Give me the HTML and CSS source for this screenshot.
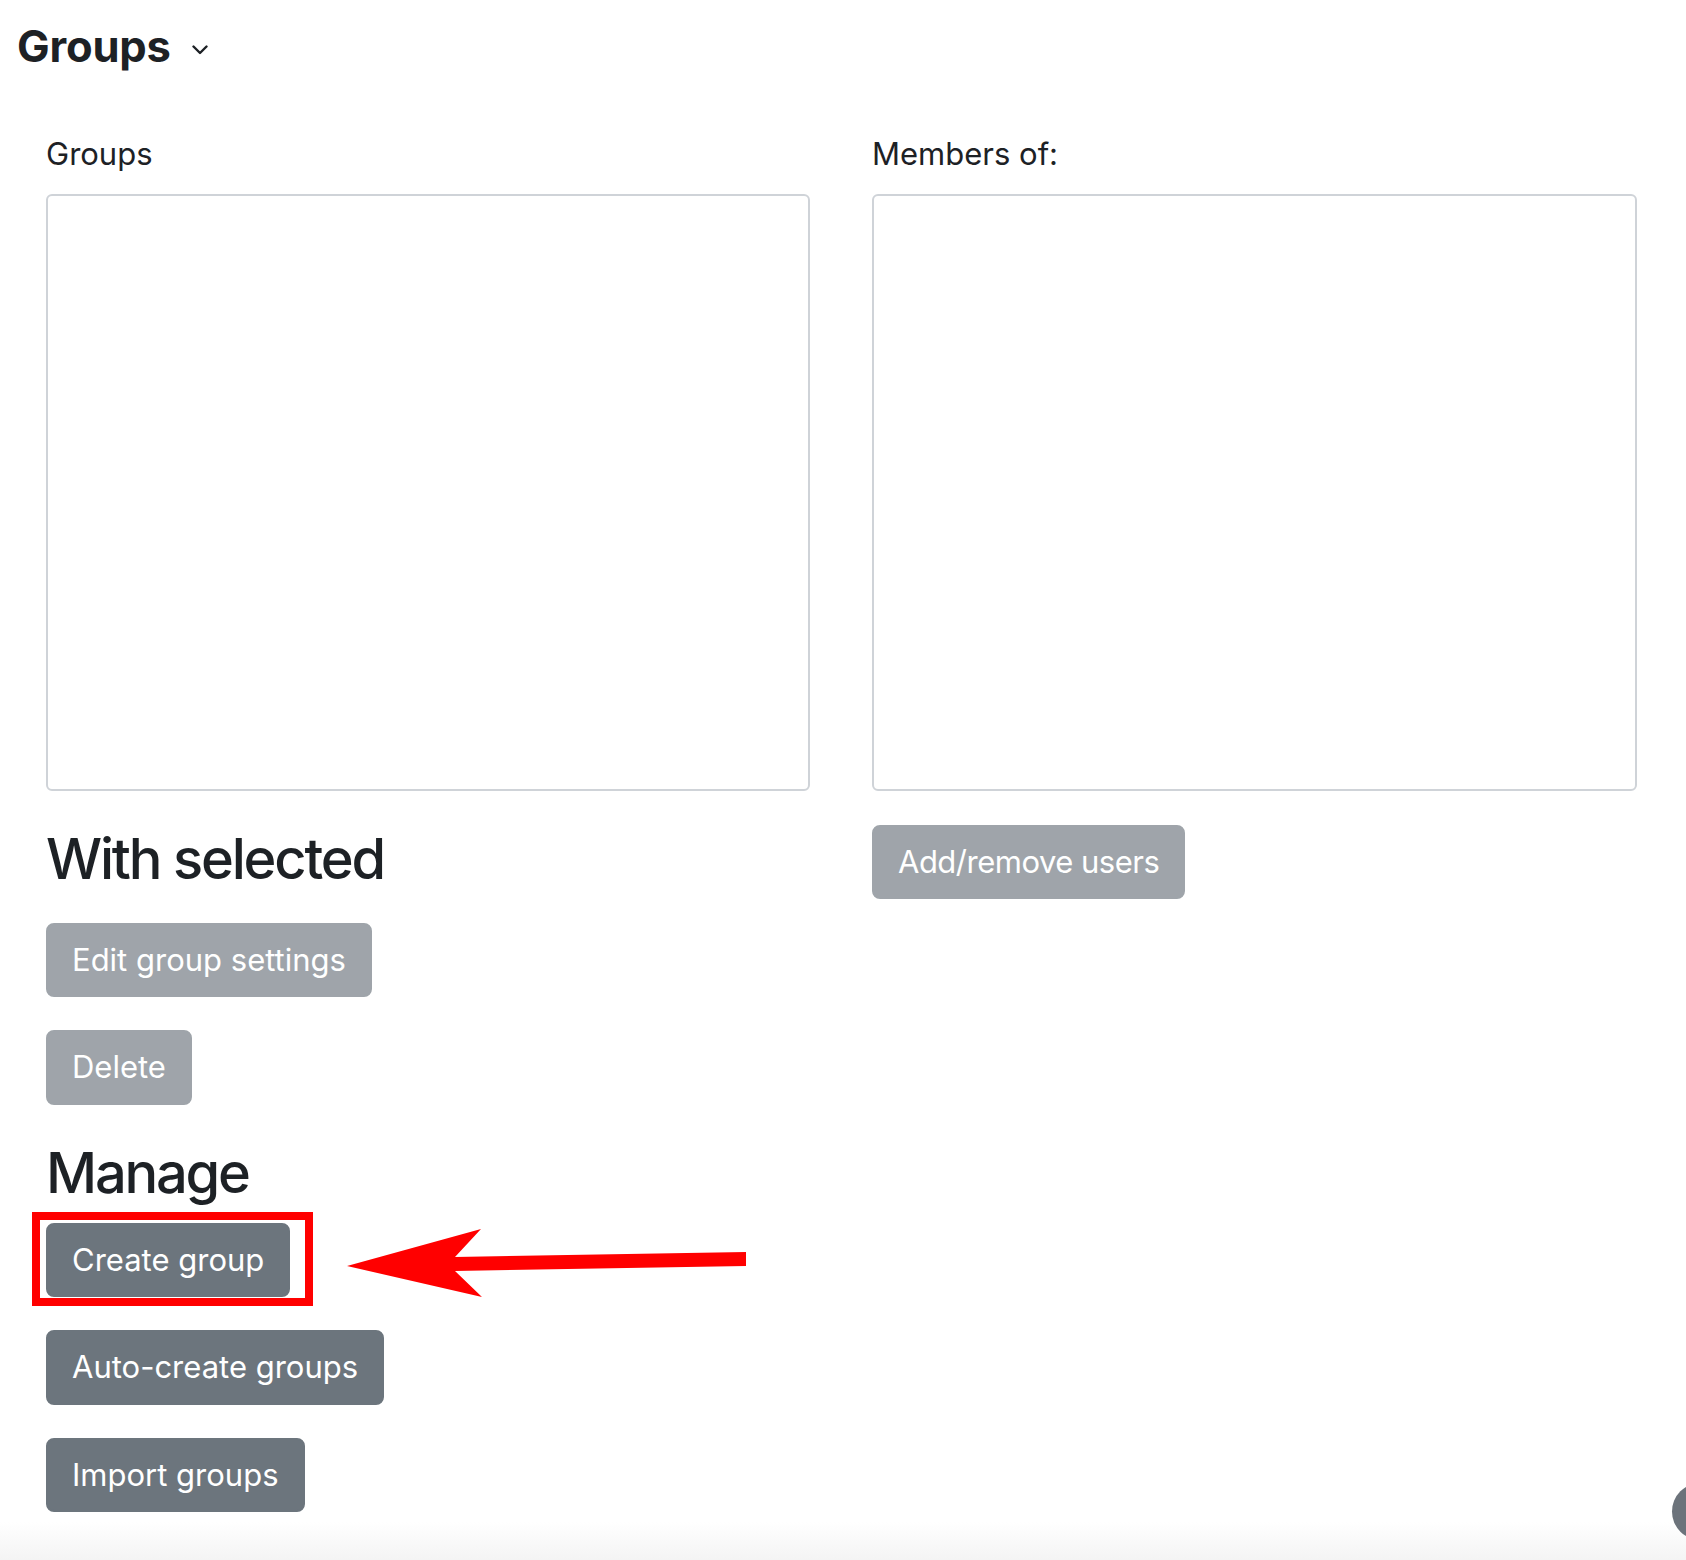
FILE: index.html
```html
<!DOCTYPE html>
<html lang="en">
<head>
<meta charset="utf-8">
<title>Groups</title>
<link rel="stylesheet" href="styles.css">
</head>
<body>
<div class="page">
  <header class="page-head">
    <h2 class="page-title">Groups
      <svg class="chevron" width="16" height="10" viewBox="0 0 16 10" aria-hidden="true"><path d="M1.5 1.5 L8 8 L14.5 1.5" fill="none" stroke="#1d2125" stroke-width="2.4" stroke-linecap="round" stroke-linejoin="round"/></svg>
    </h2>
  </header>

  <main class="groups-grid">
    <section class="col">
      <label class="field-label">Groups</label>
      <div class="listbox" role="listbox"></div>
      <h3 class="section-title title-selected">With selected</h3>
      <div class="btn-stack">
        <button class="btn btn-disabled" disabled>Edit group settings</button>
        <button class="btn btn-disabled" disabled>Delete</button>
      </div>
      <h3 class="section-title title-manage">Manage</h3>
      <div class="btn-stack">
        <button class="btn">Create group</button>
        <button class="btn">Auto-create groups</button>
        <button class="btn">Import groups</button>
      </div>
    </section>

    <section class="col">
      <label class="field-label">Members of:</label>
      <div class="listbox" role="listbox"></div>
      <div class="btn-stack members-actions">
        <button class="btn btn-disabled btn-tight" disabled>Add/remove users</button>
      </div>
    </section>
  </main>

  <div class="annot-box"></div>
  <svg class="annot-arrow" width="410" height="80" viewBox="0 0 410 80" aria-hidden="true">
    <polygon points="7,41 141,4 115,32 406,27 406,41 115,46 142,72" fill="#ff0000"/>
  </svg>
  <div class="help-fab"></div>
</div>
</body>
</html>
```

FILE: styles.css
```css
html {
  background: linear-gradient(to bottom, #ffffff 0, #ffffff 1522px, #f4f4f4 1560px);
  min-height: 1560px;
}

body {
  margin: 0;
  font-family: Inter, "Noto Sans", "Liberation Sans", sans-serif;
  color: #1d2125;
}

.page {
  position: relative;
  min-height: 1560px;
  overflow: hidden;
}

.page-head {
  padding: 21px 0 0 17px;
}

.page-title {
  display: flex;
  align-items: center;
  margin: 0;
  font-size: 43.5px;
  line-height: 50px;
  font-weight: 700;
  letter-spacing: -0.2px;
}

.chevron {
  margin-left: 21px;
  margin-top: 8px;
}

.groups-grid {
  display: grid;
  grid-template-columns: 764px 765px;
  column-gap: 62px;
  padding: 60px 0 0 46px;
  align-items: start;
}

.col {
  display: flex;
  flex-direction: column;
  align-items: flex-start;
}

.field-label {
  display: block;
  font-size: 31px;
  line-height: 46.5px;
  margin-bottom: 16px;
}

.listbox {
  box-sizing: border-box;
  width: 100%;
  height: 597px;
  border: 2px solid #cfd3d8;
  border-radius: 6px;
  background: #ffffff;
}

.section-title {
  margin: 0;
  font-size: 56px;
  line-height: 72px;
  font-weight: 500;
  letter-spacing: -2.2px;
}

.title-selected {
  margin: 32px 0 28px;
}

.title-manage {
  margin: 32px 0 14px;
}

.btn-stack {
  display: flex;
  flex-direction: column;
  align-items: flex-start;
  gap: 33px;
}

.members-actions {
  margin-top: 34px;
}

.btn {
  font-family: Inter, "Noto Sans", "Liberation Sans", sans-serif;
  font-size: 31px;
  line-height: 46.5px;
  font-weight: 400;
  color: #ffffff;
  background: #6c757d;
  border: 2px solid #6c757d;
  border-radius: 8px;
  padding: 12px 24px;
  margin: 0;
  cursor: pointer;
}

.btn-tight {
  letter-spacing: -0.5px;
}

.btn-disabled {
  opacity: 0.65;
  cursor: default;
}

.annot-box {
  position: absolute;
  left: 32px;
  top: 1212px;
  width: 281px;
  height: 94px;
  box-sizing: border-box;
  border: 8px solid #ff0000;
}

.annot-arrow {
  position: absolute;
  left: 340px;
  top: 1225px;
}

.help-fab {
  position: absolute;
  left: 1672px;
  top: 1483px;
  width: 57px;
  height: 57px;
  border-radius: 50%;
  background: #6c737b;
}
```
